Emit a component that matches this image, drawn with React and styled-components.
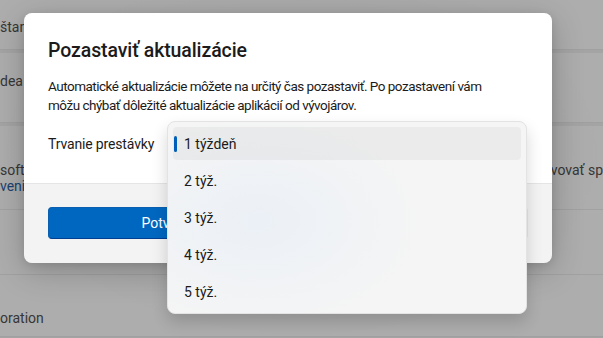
import React from "react";
import styled, { createGlobalStyle } from "styled-components";

const GlobalStyle = createGlobalStyle`
  html, body {
    margin: 0;
    padding: 0;
    overflow: hidden;
  }
  body {
    font-family: Roboto, "Noto Sans", "Liberation Sans", sans-serif;
    -webkit-font-smoothing: antialiased;
  }
`;

const weeks = ["1 týždeň", "2 týž.", "3 týž.", "4 týž.", "5 týž."];

const App = () => {
  return (
    <Screen>
      <GlobalStyle />
      <Page>
        <Card $height={50}>
          <BgText $top={19}>štandardné</BgText>
        </Card>
        <Card $height={70}>
          <BgText $top={20}>dea</BgText>
        </Card>
        <Card $height={211}>
          <CardRow $height={84}>
            <RowText>
              <BgText $top={36}>soft Store</BgText>
              <BgLink>venia</BgLink>
            </RowText>
            <BgText $top={36}>avovať sp</BgText>
          </CardRow>
          <CardRow $height={66} />
          <CardRow $height={61}>
            <BgText $top={35}>oration</BgText>
          </CardRow>
        </Card>
      </Page>

      <Overlay>
        <Dialog>
          <Body>
            <Title>Pozastaviť aktualizácie</Title>
            <Message>
              Automatické aktualizácie môžete na určitý čas pozastaviť. Po
              pozastavení vám môžu chýbať dôležité aktualizácie aplikácií od
              vývojárov.
            </Message>
            <FieldRow>
              <Label>Trvanie prestávky</Label>
              <Combo />
            </FieldRow>
          </Body>
          <Footer>
            <Button $primary>Potvrdiť</Button>
            <Button>Zrušiť</Button>
          </Footer>

          <Menu>
            {weeks.map((w, i) => (
              <MenuItem key={w} $selected={i === 0}>
                {i === 0 && <Indicator />}
                {w}
              </MenuItem>
            ))}
          </Menu>
        </Dialog>
      </Overlay>
    </Screen>
  );
};

const Screen = styled.div`
  position: relative;
  width: 603px;
  height: 338px;
  overflow: hidden;
  background: #a4a4a4;
`;

const Page = styled.div`
  display: flex;
  flex-direction: column;
  gap: 3px;
`;

const Card = styled.div`
  height: ${(p) => p.$height}px;
  background: #adadad;
  border-bottom: 1px solid #a0a0a0;
  box-sizing: border-box;
  display: flex;
  flex-direction: column;
  flex-shrink: 0;
`;

const CardRow = styled.div`
  height: ${(p) => p.$height}px;
  display: flex;
  justify-content: space-between;
  border-bottom: 1px solid #a1a1a1;
  box-sizing: border-box;
  overflow: hidden;
  &:last-child {
    border-bottom: none;
  }
`;

const RowText = styled.div`
  display: flex;
  flex-direction: column;
`;

const BgText = styled.div`
  margin-top: ${(p) => p.$top}px;
  font-size: 14px;
  line-height: 16px;
  color: #363636;
  white-space: nowrap;
`;

const BgLink = styled.div`
  font-size: 14px;
  line-height: 16px;
  color: #1a4170;
  white-space: nowrap;
`;

const Overlay = styled.div`
  position: absolute;
  inset: 0;
  padding: 13px 0 0 24px;
  background: radial-gradient(
    ellipse at 50% 45%,
    rgba(0, 0, 0, 0.08),
    rgba(0, 0, 0, 0) 72%
  );
`;

const Dialog = styled.div`
  position: relative;
  width: 528px;
  border-radius: 8px;
  box-shadow: 0 8px 32px rgba(0, 0, 0, 0.22), 0 2px 8px rgba(0, 0, 0, 0.1);
  color: #1b1b1b;
`;

const Body = styled.div`
  background: #ffffff;
  border-radius: 8px 8px 0 0;
  padding: 24px 24px 23px;
  display: flex;
  flex-direction: column;
`;

const Title = styled.h2`
  margin: 0 0 12px;
  font-size: 19.5px;
  line-height: 28px;
  font-weight: 500;
  letter-spacing: -0.1px;
`;

const Message = styled.p`
  margin: 0;
  max-width: 445px;
  font-size: 13.5px;
  line-height: 19px;
  letter-spacing: -0.5px;
`;

const FieldRow = styled.div`
  margin-top: 13px;
  display: flex;
  align-items: center;
  gap: 13px;
  height: 32px;
`;

const Label = styled.span`
  font-size: 14px;
  letter-spacing: -0.15px;
  white-space: nowrap;
  flex: none;
  width: 106px;
`;

const Combo = styled.div`
  width: 360px;
  height: 32px;
  border-radius: 4px;
  background: #fbfbfb;
`;

const Footer = styled.div`
  background: #f3f3f3;
  border-top: 1px solid #e5e5e5;
  border-radius: 0 0 8px 8px;
  padding: 23px 24px 24px;
  display: flex;
  gap: 8px;
`;

const Button = styled.button`
  flex: 1;
  height: 32px;
  border-radius: 4px;
  font-family: inherit;
  font-size: 14px;
  border: 1px solid ${(p) => (p.$primary ? "#0a5fb0" : "#e5e5e5")};
  border-bottom-color: ${(p) => (p.$primary ? "#003e92" : "#cccccc")};
  background: ${(p) => (p.$primary ? "#0067c0" : "#fbfbfb")};
  color: ${(p) => (p.$primary ? "#ffffff" : "#1b1b1b")};
`;

const Menu = styled.div`
  position: absolute;
  left: 143px;
  top: 108px;
  width: 360px;
  box-sizing: border-box;
  padding: 5px;
  display: flex;
  flex-direction: column;
  gap: 4px;
  border-radius: 8px;
  border: 1px solid #e3e3e3;
  background: radial-gradient(
      ellipse 170px 110px at 25% 52%,
      #ebf0f6,
      rgba(235, 240, 246, 0) 100%
    ),
    #f5f5f5;
  box-shadow: 0 8px 16px rgba(0, 0, 0, 0.16);
`;

const MenuItem = styled.div`
  position: relative;
  height: 33px;
  border-radius: 4px;
  display: flex;
  align-items: center;
  padding-left: 11px;
  font-size: 14px;
  color: #1b1b1b;
  background: ${(p) => (p.$selected ? "rgba(0, 0, 0, 0.04)" : "transparent")};
`;

const Indicator = styled.span`
  position: absolute;
  left: 1px;
  top: 9px;
  width: 3px;
  height: 16px;
  border-radius: 2px;
  background: #005fb8;
`;

export default App;
